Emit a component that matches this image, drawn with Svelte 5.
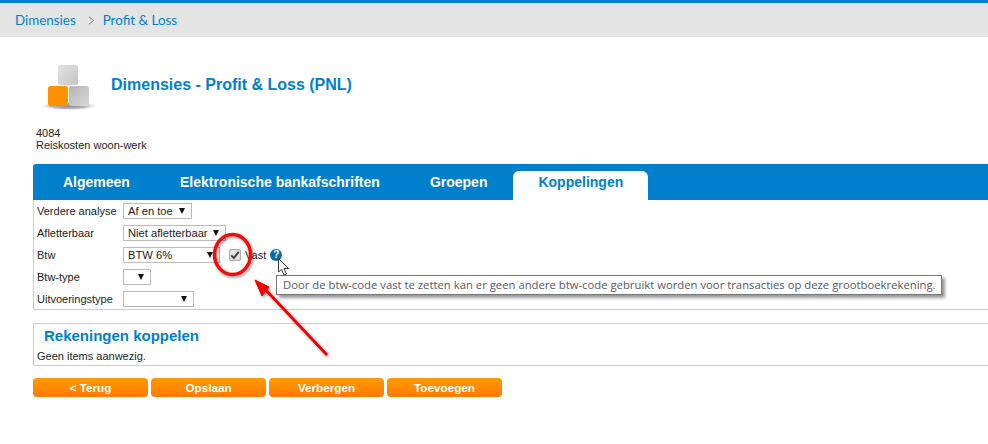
<script>
  const rows = [
    { label: 'Verdere analyse', value: 'Af en toe', width: 69 },
    { label: 'Afletterbaar', value: 'Niet afletterbaar', width: 103 },
    { label: 'Btw', value: 'BTW 6%', width: 97, vast: true },
    { label: 'Btw-type', value: '', width: 28 },
    { label: 'Uitvoeringstype', value: '', width: 71 }
  ];
  const tabs = ['Algemeen', 'Elektronische bankafschriften', 'Groepen', 'Koppelingen'];
  const buttons = ['< Terug', 'Opslaan', 'Verbergen', 'Toevoegen'];
</script>

<div class="page">
  <nav class="crumbs">
    <span>Dimensies</span>
    <svg class="sep" width="7" height="9" viewBox="0 0 7 9"><path d="M1 .8 5.6 4.5 1 8.2" fill="none" stroke="#777" stroke-width="1"/></svg>
    <span>Profit &amp; Loss</span>
  </nav>

  <header class="title">
    <svg class="logo" width="62" height="48" viewBox="0 0 62 48">
      <defs>
        <linearGradient id="g1" x1="0" y1="0" x2="1" y2="1"><stop offset="0" stop-color="#e2e2e2"/><stop offset="1" stop-color="#c6c6c6"/></linearGradient>
        <linearGradient id="g2" x1="0" y1="0" x2="1" y2="1"><stop offset="0" stop-color="#b4b4b4"/><stop offset="1" stop-color="#d8d8d8"/></linearGradient>
        <radialGradient id="sh"><stop offset="0" stop-color="#888"/><stop offset=".6" stop-color="#bbb"/><stop offset="1" stop-color="#fff" stop-opacity="0"/></radialGradient>
      </defs>
      <ellipse cx="29" cy="41" rx="30" ry="4.5" fill="url(#sh)"/>
      <rect x="18" y="0" width="20" height="20" rx="2.5" fill="url(#g1)"/>
      <rect x="8" y="21" width="20" height="20" rx="2.5" fill="#ff9000"/>
      <rect x="29" y="21" width="20" height="20" rx="2.5" fill="url(#g2)"/>
    </svg>
    <h1>Dimensies - Profit &amp; Loss (PNL)</h1>
  </header>

  <div class="meta">
    <div>4084</div>
    <div>Reiskosten woon-werk</div>
  </div>

  <div class="tabs">
    {#each tabs as tab, i}
      <div class="tab" class:active={i === 3}>{tab}</div>
    {/each}
  </div>

  <section class="form">
    {#each rows as row}
      <div class="row">
        <div class="label">{row.label}</div>
        <div class="select" style="width: {row.width}px">
          <span>{row.value}</span><i class="caret"></i>
        </div>
        {#if row.vast}
          <span class="check">
            <svg width="10" height="10" viewBox="0 0 10 10"><path d="M1.2 5.4 3.8 8 8.8 1.8" fill="none" stroke="#444" stroke-width="2"/></svg>
          </span>
          <span class="vast">Vast</span>
          <span class="help">?</span>
        {/if}
      </div>
    {/each}
  </section>

  <section class="linked">
    <h2>Rekeningen koppelen</h2>
    <p>Geen items aanwezig.</p>
  </section>

  <div class="buttons">
    {#each buttons as b}
      <button>{b}</button>
    {/each}
  </div>

  <div class="tooltip">Door de btw-code vast te zetten kan er geen andere btw-code gebruikt worden voor transacties op deze grootboekrekening.</div>

  <svg class="overlay" width="988" height="444" viewBox="0 0 988 444">
    <defs>
      <filter id="ds" x="-20%" y="-20%" width="150%" height="150%"><feDropShadow dx="1.5" dy="1.5" stdDeviation="1.5" flood-color="#000" flood-opacity=".4"/></filter>
    </defs>
    <ellipse cx="232.5" cy="254.5" rx="18" ry="20" fill="none" stroke="#ee1111" stroke-width="3.5" filter="url(#ds)"/>
    <g filter="url(#ds)">
      <path d="M327 355 263 287" stroke="#ee0000" stroke-width="2.8" fill="none"/>
      <path d="M255 280 269 287 262 296Z" fill="#ee0000" stroke="#ee0000" stroke-width="1" stroke-linejoin="round"/>
    </g>
    <path d="M278.5 258.5V272L281.5 269.5 284 275 286.5 274 284 268.5H288.5Z" fill="#fff" stroke="#333" stroke-width="1"/>
  </svg>
</div>

<style>
  :global(body) { margin: 0; background: #fff; }
  .page {
    position: relative;
    width: 988px;
    height: 444px;
    overflow: hidden;
    font-family: "Liberation Sans", Arial, sans-serif;
    font-size: 11px;
    color: #222;
    border-top: 3px solid #0080cc;
    box-sizing: border-box;
  }
  .crumbs {
    height: 34px;
    background: #e4e4e4;
    display: flex;
    align-items: center;
    padding-left: 15px;
    font-family: Lato, sans-serif;
    font-size: 13.4px;
    color: #0080cc;
  }
  .sep { margin: 1px 8px 0 12px; }
  .title {
    display: flex;
    align-items: center;
    height: 48px;
    margin-top: 28px;
    padding-left: 40px;
    box-sizing: border-box;
  }
  .logo { flex: none; }
  h1 {
    margin: 0 0 9px 9px;
    font-size: 16px;
    font-weight: bold;
    color: #0080cc;
  }
  .meta {
    margin-top: 14px;
    padding-left: 36px;
    font-size: 11px;
    line-height: 12px;
  }
  .tabs {
    margin: 13px 0 0 33px;
    height: 36px;
    background: #0080cc;
    border-radius: 3px 0 0 0;
    display: flex;
    align-items: flex-end;
    padding-left: 5px;
  }
  .tab {
    height: 29px;
    line-height: 23px;
    padding: 0 25px;
    font-size: 14px;
    font-weight: bold;
    color: #fff;
    white-space: nowrap;
  }
  .tab.active {
    margin-left: 1px;
    background: #fff;
    color: #0080cc;
    border-radius: 6px 6px 0 0;
  }
  .form {
    margin-left: 33px;
    height: 110px;
    box-sizing: border-box;
    border-left: 1px solid #ccc;
    border-bottom: 1px solid #ccc;
    padding-top: 3px;
  }
  .row {
    height: 16px;
    margin-bottom: 6px;
    display: flex;
    align-items: center;
  }
  .label { width: 89px; padding-left: 3px; box-sizing: border-box; white-space: nowrap; font-size: 11px; }
  .select {
    height: 16px;
    box-sizing: border-box;
    border: 1px solid #bbb;
    padding: 0 4px;
    display: flex;
    align-items: center;
    justify-content: space-between;
    font-size: 11.2px;
    white-space: nowrap;
    background: #fff;
  }
  .caret {
    flex: none;
    margin-left: auto;
    margin-right: 2px;
    width: 0;
    height: 0;
    border-left: 3.5px solid transparent;
    border-right: 3.5px solid transparent;
    border-top: 6px solid #111;
  }
  .check {
    margin-left: 9px;
    width: 12px;
    height: 12px;
    box-sizing: border-box;
    border: 1px solid #aaa;
    border-radius: 2px;
    background: #e2e2e2;
    display: flex;
    align-items: center;
    justify-content: center;
  }
  .vast { margin-left: 4px; font-size: 11px; }
  .help {
    margin-left: 4px;
    width: 12px;
    height: 12px;
    border-radius: 50%;
    background: #0a6cae;
    color: #fff;
    font-size: 10px;
    font-weight: bold;
    line-height: 12px;
    text-align: center;
  }
  .linked {
    margin: 13px 0 0 33px;
    height: 43px;
    box-sizing: border-box;
    border: 1px solid #ccc;
    border-right: 0;
  }
  h2 {
    margin: 3px 0 0 10px;
    font-size: 15px;
    line-height: 17px;
    font-weight: bold;
    color: #0080cc;
  }
  p {
    margin: 6px 0 0 3px;
    font-size: 11px;
    line-height: 12px;
  }
  .buttons {
    margin: 12px 0 0 33px;
    display: flex;
    gap: 3px;
  }
  button {
    width: 115px;
    height: 19px;
    padding: 0;
    border: 0;
    border-radius: 4px;
    background: linear-gradient(#ff9c00, #ff7a00);
    color: #fff;
    font-family: inherit;
    font-size: 11.7px;
    font-weight: bold;
  }
  .tooltip {
    position: absolute;
    left: 276px;
    top: 272px;
    width: 666px;
    height: 20px;
    box-sizing: border-box;
    border: 1px solid #777;
    background: #fff;
    box-shadow: 3px 3px 3px #999;
    padding-left: 6px;
    font-family: "Open Sans", sans-serif;
    font-size: 11.3px;
    line-height: 18px;
    color: #575767;
    white-space: nowrap;
  }
  .overlay { position: absolute; left: 0; top: -3px; pointer-events: none; }
</style>
